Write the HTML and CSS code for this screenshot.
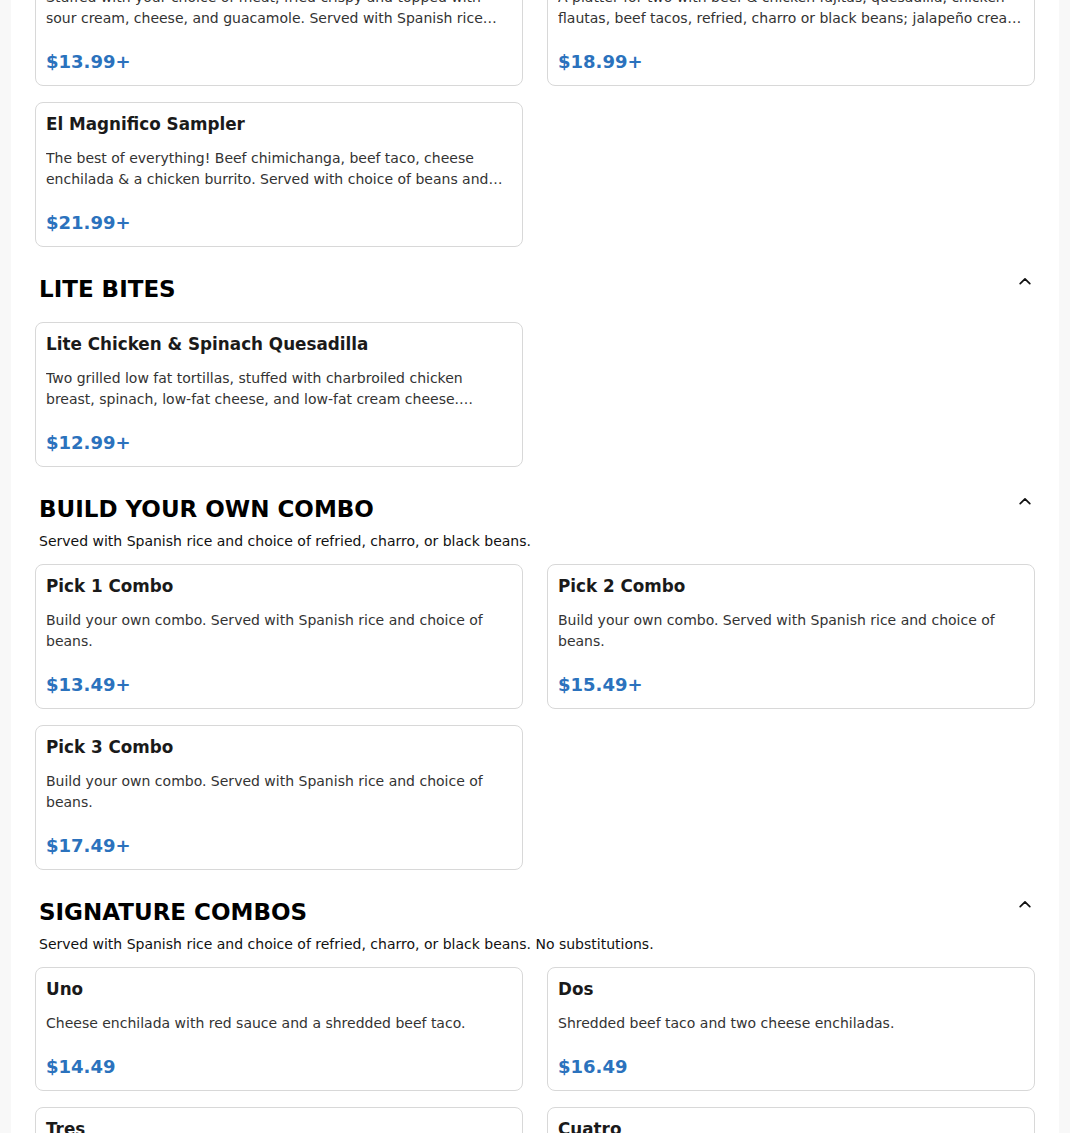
FILE: index.html
```html
<!DOCTYPE html>
<html lang="en">
<head>
<meta charset="utf-8">
<title>Menu</title>
<link rel="stylesheet" href="styles.css">
</head>
<body>
<main class="page">
  <section class="section section-first">
    <div class="grid">
      <article class="card">
        <h3 class="card-title">Chimichanga Dinner</h3>
        <p class="card-desc">Stuffed with your choice of meat, fried crispy and topped with sour cream, cheese, and guacamole. Served with Spanish rice and beans.</p>
        <div class="card-price">$13.99+</div>
      </article>
      <article class="card">
        <h3 class="card-title">Fiesta Platter</h3>
        <p class="card-desc">A platter for two with beef &amp; chicken fajitas, quesadilla, chicken flautas, beef tacos, refried, charro or black beans; jalapeño cream sauce and more.</p>
        <div class="card-price">$18.99+</div>
      </article>
      <article class="card">
        <h3 class="card-title">El Magnifico Sampler</h3>
        <p class="card-desc">The best of everything! Beef chimichanga, beef taco, cheese enchilada &amp; a chicken burrito. Served with choice of beans and Spanish rice.</p>
        <div class="card-price">$21.99+</div>
      </article>
    </div>
  </section>

  <section class="section">
    <header class="section-head">
      <h2 class="section-title">LITE BITES</h2>
      <svg class="chevron" width="12" height="8" viewBox="0 0 12 8" aria-hidden="true"><path d="M1.2 6.6 L6 1.8 L10.8 6.6" fill="none" stroke="#111" stroke-width="1.7" stroke-linecap="round" stroke-linejoin="round"/></svg>
    </header>
    <div class="grid grid-nodesc">
      <article class="card">
        <h3 class="card-title">Lite Chicken &amp; Spinach Quesadilla</h3>
        <p class="card-desc">Two grilled low fat tortillas, stuffed with charbroiled chicken breast, spinach, low-fat cheese, and low-fat cream cheese. Served with pico de gallo and lettuce.</p>
        <div class="card-price">$12.99+</div>
      </article>
    </div>
  </section>

  <section class="section">
    <header class="section-head">
      <h2 class="section-title">BUILD YOUR OWN COMBO</h2>
      <svg class="chevron" width="12" height="8" viewBox="0 0 12 8" aria-hidden="true"><path d="M1.2 6.6 L6 1.8 L10.8 6.6" fill="none" stroke="#111" stroke-width="1.7" stroke-linecap="round" stroke-linejoin="round"/></svg>
    </header>
    <p class="section-desc">Served with Spanish rice and choice of refried, charro, or black beans.</p>
    <div class="grid">
      <article class="card">
        <h3 class="card-title">Pick 1 Combo</h3>
        <p class="card-desc">Build your own combo. Served with Spanish rice and choice of beans.</p>
        <div class="card-price">$13.49+</div>
      </article>
      <article class="card">
        <h3 class="card-title">Pick 2 Combo</h3>
        <p class="card-desc">Build your own combo. Served with Spanish rice and choice of beans.</p>
        <div class="card-price">$15.49+</div>
      </article>
      <article class="card">
        <h3 class="card-title">Pick 3 Combo</h3>
        <p class="card-desc">Build your own combo. Served with Spanish rice and choice of beans.</p>
        <div class="card-price">$17.49+</div>
      </article>
    </div>
  </section>

  <section class="section">
    <header class="section-head">
      <h2 class="section-title">SIGNATURE COMBOS</h2>
      <svg class="chevron" width="12" height="8" viewBox="0 0 12 8" aria-hidden="true"><path d="M1.2 6.6 L6 1.8 L10.8 6.6" fill="none" stroke="#111" stroke-width="1.7" stroke-linecap="round" stroke-linejoin="round"/></svg>
    </header>
    <p class="section-desc">Served with Spanish rice and choice of refried, charro, or black beans. No substitutions.</p>
    <div class="grid">
      <article class="card">
        <h3 class="card-title">Uno</h3>
        <p class="card-desc">Cheese enchilada with red sauce and a shredded beef taco.</p>
        <div class="card-price">$14.49</div>
      </article>
      <article class="card">
        <h3 class="card-title">Dos</h3>
        <p class="card-desc">Shredded beef taco and two cheese enchiladas.</p>
        <div class="card-price">$16.49</div>
      </article>
      <article class="card">
        <h3 class="card-title">Tres</h3>
        <p class="card-desc">Two cheese enchiladas with red sauce and a shredded beef taco.</p>
        <div class="card-price">$17.49</div>
      </article>
      <article class="card">
        <h3 class="card-title">Cuatro</h3>
        <p class="card-desc">Two shredded beef tacos and two cheese enchiladas.</p>
        <div class="card-price">$18.49</div>
      </article>
    </div>
  </section>
</main>
</body>
</html>
```

FILE: styles.css
```css
* { box-sizing: border-box; }

html, body {
  margin: 0;
  padding: 0;
}

body {
  background: #f8f8f8;
  font-family: "DejaVu Sans", Verdana, sans-serif;
  color: #111;
  overflow: hidden;
}

.page {
  width: 1048px;
  margin: 0 auto;
  background: #fff;
  padding: 0 24px 40px;
  min-height: 1133px;
}

.section {
  margin-top: 27px;
}

.section-first {
  margin-top: -59px;
}

.section-head {
  display: flex;
  justify-content: space-between;
  align-items: flex-start;
  padding: 0 4px;
  margin-bottom: 7px;
}

.section-title {
  margin: 0;
  font-size: 23px;
  line-height: 30px;
  font-weight: 700;
  color: #000;
}

.chevron {
  margin-top: 3px;
  margin-right: 0;
  flex: none;
}

.section-desc {
  margin: 0;
  padding: 0 4px;
  font-size: 14px;
  line-height: 20px;
  color: #111;
}

.grid {
  display: grid;
  grid-template-columns: 1fr 1fr;
  column-gap: 24px;
  row-gap: 16px;
  margin-top: 13px;
}

.grid-nodesc {
  margin-top: 18px;
}

.section-first .grid {
  margin-top: 0;
}

.card {
  border: 1px solid #d8d8d8;
  border-radius: 8px;
  padding: 11px 10px 12px;
  background: #fff;
  display: flex;
  flex-direction: column;
}

.card-title {
  margin: 0 0 14px;
  font-size: 16.8px;
  line-height: 20.4px;
  font-weight: 700;
  color: #1a1a1a;
}

.card-desc {
  margin: 0 0 22px;
  font-size: 14px;
  line-height: 21px;
  color: #333;
  display: -webkit-box;
  -webkit-line-clamp: 2;
  -webkit-box-orient: vertical;
  overflow: hidden;
}

.card-price {
  margin-top: auto;
  font-size: 18px;
  line-height: 21.6px;
  font-weight: 700;
  color: #2b72bd;
}
```
